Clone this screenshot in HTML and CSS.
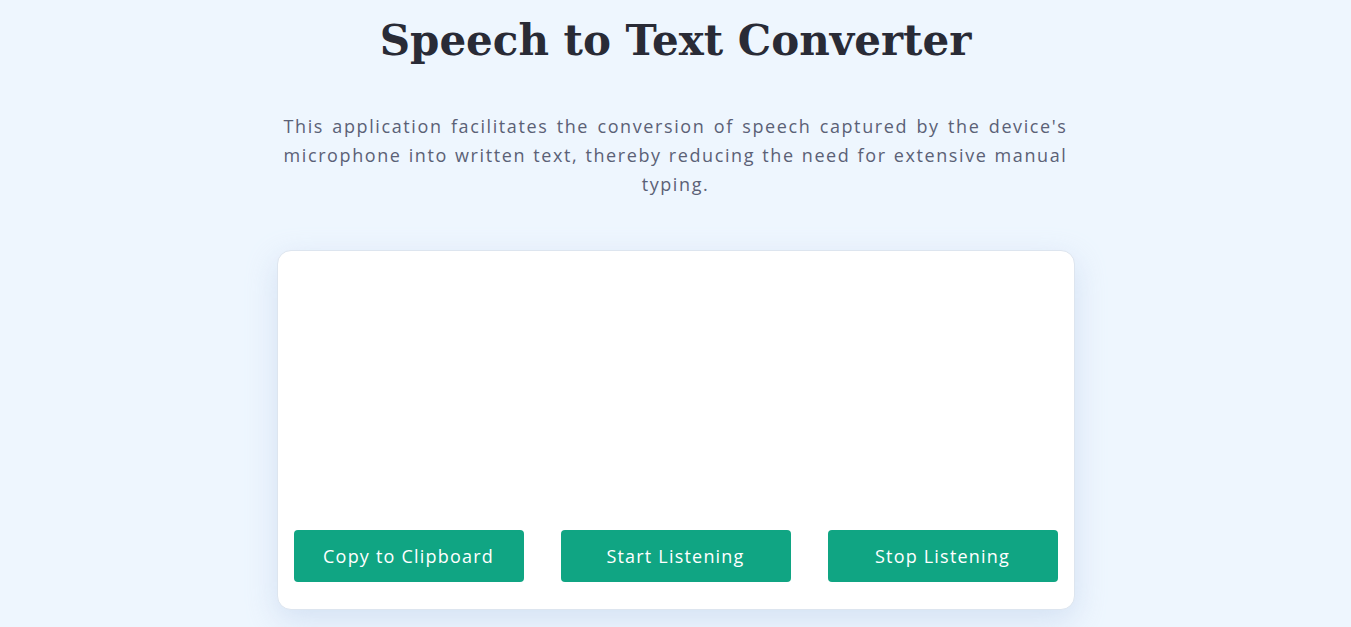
FILE: index.html
```html
<!DOCTYPE html>
<html>
<head>
<meta charset="utf-8">
<link rel="stylesheet" href="styles.css">
</head>
<body>
<main class="container">
  <h1 class="title">Speech to Text Converter</h1>
  <p class="intro">This application facilitates the conversion of speech captured by the device's microphone into written text, thereby reducing the need for extensive manual typing.</p>
  <section class="card">
    <div class="text-area"></div>
    <div class="actions">
      <button class="btn">Copy to Clipboard</button>
      <button class="btn">Start Listening</button>
      <button class="btn">Stop Listening</button>
    </div>
  </section>
</main>
</body>
</html>
```

FILE: styles.css
```css
html, body {
  margin: 0;
  padding: 0;
  background: #eef6fe;
  height: 100%;
  overflow: hidden;
}
.container {
  width: 800px;
  margin: 0 auto;
  display: flex;
  flex-direction: column;
  align-items: center;
}
.title {
  margin: 10px 0 0;
  font-family: "DejaVu Serif", "Liberation Serif", serif;
  font-weight: bold;
  font-size: 42px;
  line-height: 62px;
  color: #292b36;
}
.intro {
  margin: 40px 0 0;
  font-family: "Open Sans", sans-serif;
  font-size: 18px;
  line-height: 29px;
  letter-spacing: 1.6px;
  color: #5b6176;
  text-align: justify;
  text-align-last: center;
  width: 784px;
}
.card {
  margin-top: 51px;
  width: 798px;
  height: 360px;
  box-sizing: border-box;
  background: #ffffff;
  border: 1px solid #dde5ef;
  border-radius: 14px;
  box-shadow: 0 10px 30px rgba(180, 200, 230, 0.45);
  display: flex;
  flex-direction: column;
  padding: 0 16px 27px;
}
.text-area {
  flex: 1;
}
.actions {
  display: flex;
  justify-content: space-between;
}
.btn {
  width: 230px;
  height: 52px;
  border: none;
  border-radius: 4px;
  background: #10a583;
  color: #ffffff;
  font-family: "Open Sans", sans-serif;
  font-size: 18px;
  letter-spacing: 1.2px;
  cursor: pointer;
}
```
